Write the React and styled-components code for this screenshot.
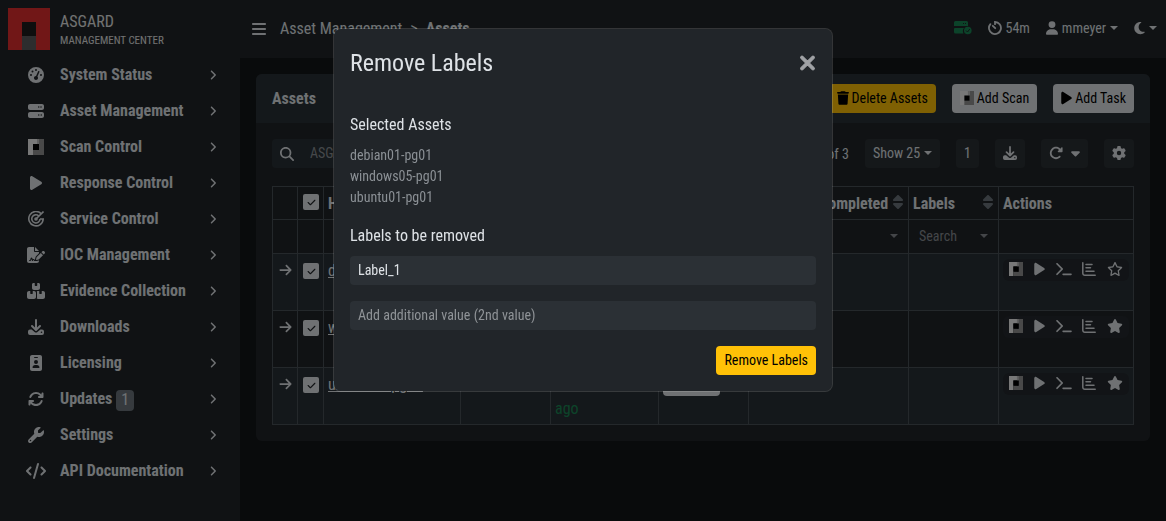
import React from 'react';
import styled, { createGlobalStyle } from 'styled-components';
import {
  FaGaugeHigh, FaServer, FaPlay, FaFileSignature, FaBoxesStacked, FaIdBadge, FaArrowsRotate,
  FaWrench, FaCode, FaAngleRight, FaBars, FaUser, FaMoon, FaTrash, FaMagnifyingGlass, FaArrowRight,
  FaRotateRight, FaGear, FaSort, FaStar, FaRegStar, FaXmark, FaTerminal, FaCheck, FaCaretDown,
} from 'react-icons/fa6';

const Global = createGlobalStyle`
  *, *::before, *::after { box-sizing: border-box; }
  body {
    margin: 0;
    background: #131619;
    color: #dee2e6;
    font: 400 16px/24px "Roboto Condensed", "Liberation Sans Narrow", Roboto, sans-serif;
  }
  button, input { font: inherit; color: inherit; }
  button { cursor: pointer; }
  a { color: inherit; }
  svg { display: block; flex: none; }
  h1, h2, h3, ul { margin: 0; padding: 0; font-weight: inherit; list-style: none; }
`;

// Gives an icon the width of its glyph instead of a square box.
const fit = (Icon, ratio) => styled(Icon)`
  width: ${p => Math.round(p.size * ratio)}px;
`;
const PlayIcon = fit(FaPlay, 0.75);
const SignatureIcon = fit(FaFileSignature, 1.125);
const BoxesIcon = fit(FaBoxesStacked, 1.125);
const CodeIcon = fit(FaCode, 1.25);
const AngleIcon = fit(FaAngleRight, 0.625);
const BarsIcon = fit(FaBars, 0.875);
const UserIcon = fit(FaUser, 0.875);
const MoonIcon = fit(FaMoon, 0.8);
const TrashIcon = fit(FaTrash, 0.875);
const ArrowIcon = fit(FaArrowRight, 0.9);
const SortIcon = fit(FaSort, 0.75);
const StarIcon = fit(FaStar, 1.125);
const StarOutlineIcon = fit(FaRegStar, 1.125);
const CloseIcon = fit(FaXmark, 0.75);
const TerminalIcon = fit(FaTerminal, 1.125);
const CaretIcon = fit(FaCaretDown, 0.625);

const Shell = styled.div`
  display: grid;
  grid-template-columns: 240px minmax(0, 1fr);
  min-height: 100vh;
`;
const Sidebar = styled.aside`
  background: #212529;
  padding: 8px;
`;
const Brand = styled.a`
  display: flex;
  gap: 10px;
  height: 49px;
  text-decoration: none;
`;
const BrandText = styled.span`
  display: flex;
  flex-direction: column;
  padding-top: 3px;
  color: #e4e4e4;
  font-size: 11px;
  line-height: 18px;
  strong { font-size: 16px; line-height: 21px; font-weight: 400; }
`;
const NavLink = styled.a`
  display: flex;
  align-items: center;
  height: 36px;
  padding: 0 15px 0 16px;
  font-weight: 700;
  text-decoration: none;
`;
const NavIcon = styled.span`
  display: flex;
  justify-content: center;
  width: 24px;
  margin-right: 12px;
`;
const NavText = styled.span`
  display: flex;
  align-items: center;
  gap: 4px;
  flex: 1;
`;
const CountBadge = styled.span`
  margin-top: 2px;
  padding: 0 5px 1px;
  border-radius: 4px;
  background: #6c757d;
  line-height: 20px;
  font-weight: 400;
`;
const Topbar = styled.header`
  display: flex;
  align-items: center;
  height: 58px;
  padding: 0 9px 0 12px;
  background: #212529;
`;
const PlainButton = styled.button`
  display: flex;
  align-items: center;
  gap: ${p => p.$gap || 0}px;
  padding: 0;
  border: 0;
  background: none;
`;
const Crumbs = styled.nav`
  display: flex;
  gap: 8px;
  flex: 1;
  margin-left: 14px;
  a { text-decoration: none; }
`;
const Status = styled.div`
  display: flex;
  align-items: center;
  gap: 16px;
  padding-bottom: 2px;
  font-size: 14px;
`;
const StatusItem = styled.span`
  display: flex;
  align-items: center;
  gap: 3px;
`;
const Caret = styled.span`
  border: 4px solid transparent;
  border-top-color: currentColor;
  border-bottom: 0;
`;
const Main = styled.main`
  padding: 16px;
`;
const Card = styled.section`
  border-radius: 6px;
  background: #212529;
  overflow: hidden;
`;
const CardHead = styled.div`
  display: flex;
  align-items: center;
  gap: 16px;
  height: 49px;
  padding: 0 16px;
  background: #293136;
  h2 { flex: 1; font-size: 16px; font-weight: 700; }
`;
const Button = styled.button`
  display: inline-flex;
  align-items: center;
  gap: 3px;
  height: 29px;
  padding: 0 8px 2px;
  border: 0;
  border-radius: 4px;
  background: ${p => (p.$tone === 'warning' ? '#ffc107' : '#dee2e6')};
  color: #000;
  font-size: 14px;
`;
const CardBody = styled.div`
  padding: 16px;
`;
const Toolbar = styled.div`
  display: flex;
  align-items: center;
  gap: 16px;
  margin-bottom: 18px;
  font-size: 14px;
`;
const SearchBox = styled.label`
  display: flex;
  align-items: center;
  flex: 1;
  height: 29px;
  padding-left: 8px;
  border-radius: 4px;
  background: #293136;
  input {
    flex: 1;
    margin-left: 16px;
    padding: 0 0 2px;
    border: 0;
    background: none;
  }
  input::placeholder { color: #8b9095; opacity: 1; }
`;
const ToolButton = styled.button`
  display: flex;
  align-items: center;
  justify-content: center;
  gap: ${p => p.$gap || 4}px;
  height: 29px;
  padding: 0 8px 2px;
  border: 0;
  border-radius: 4px;
  background: #2b3035;
`;
const Table = styled.table`
  width: 100%;
  table-layout: fixed;
  border-collapse: collapse;
  th, td { border: 1px solid #495057; padding: 5px 4px 3px; text-align: left; vertical-align: top; }
  thead td { padding: 4px; }
  thead tr { height: 33px; }
  thead tr + tr { height: 34px; }
  tbody tr { height: 57px; }
  tbody tr:nth-child(odd) { background: #293136; }
`;
const HeadCell = styled.div`
  display: flex;
  justify-content: space-between;
  white-space: nowrap;
  svg { color: #6c757d; margin-top: 2px; }
`;
const FilterButton = styled.button`
  display: flex;
  align-items: center;
  justify-content: space-between;
  width: 100%;
  height: 24px;
  padding: 0 6px;
  border: 0;
  background: none;
  color: #888d93;
  font-size: 14px;
`;
const Check = styled.label`
  display: grid;
  width: 16px;
  height: 16px;
  margin: 4px 1px;
  place-items: center;
  thead & { margin: 2px 1px 6px; }
  > * { grid-area: 1 / 1; }
  input {
    appearance: none;
    width: 16px;
    height: 16px;
    margin: 0;
    border-radius: 2px;
    background: #dee2e6;
  }
  svg { z-index: 1; color: #212529; pointer-events: none; }
`;
const RowOpen = styled(PlainButton)`
  margin: 4px 2px;
`;
const Seen = styled.span`
  color: #198754;
`;
const LabelTag = styled.span`
  display: block;
  width: fit-content;
  padding: 0 7px;
  border-radius: 4px;
  background: #dee2e6;
  color: #212529;
  font-size: 14px;
  line-height: 23px;
`;
const Actions = styled.div`
  display: flex;
  align-items: center;
  justify-content: space-between;
  height: 22px;
  padding: 0 6px 2px;
  border-radius: 6px;
  background: #24292e;
`;
const Backdrop = styled.div`
  position: fixed;
  inset: 0;
  z-index: 2;
  padding: 28px 16px;
  background: rgba(0, 0, 0, 0.5);
`;
const Modal = styled.div`
  max-width: 500px;
  margin: 0 auto;
  border: 1px solid rgba(255, 255, 255, 0.15);
  border-radius: 8px;
  background: #212529;
  background-clip: padding-box;
`;
const ModalHead = styled.div`
  display: flex;
  align-items: center;
  justify-content: space-between;
  padding: 16px;
  h1 { font-size: 24px; line-height: 36px; }
  button { color: #a0a2a5; }
`;
const ModalForm = styled.form`
  display: flex;
  flex-direction: column;
  padding: 16px;
  h2 { font-size: 16px; margin-bottom: 8px; }
`;
const AssetList = styled.ul`
  margin-bottom: 16px;
  color: #8b9095;
  font-size: 14px;
  line-height: 21px;
`;
const TextInput = styled.input`
  height: 29px;
  margin-bottom: 16px;
  padding: 0 8px 2px;
  border: 0;
  border-radius: 4px;
  background: #2b3035;
  font-size: 14px;
  &::placeholder { color: #8f9397; opacity: 1; }
`;
const SubmitButton = styled(Button)`
  align-self: flex-end;
`;

const Logo = () => (
  <svg width="42" height="42" viewBox="0 0 42 42" aria-hidden="true">
    <path fill="#e22e2e" d="M0 0h42v42H28V14H14v28H0z" />
    <path fill="#1c1c1c" d="M14 14h14v14H14z" />
    <path fill="#5a5a5c" d="M14 28h14v14H14z" />
  </svg>
);
const ScanIcon = ({ size = 16 }) => (
  <svg width={size} height={size} viewBox="0 0 16 16" aria-hidden="true">
    <path fill="#f0f0f0" d="M0 0h11v5H5v11H0z" />
    <path fill="#929292" d="M11 0h5v16H5v-5h6z" />
    <path fill="#c0c0c0" d="M9 0h2v5H9z" />
    <path fill="#000" d="M5 5h6v6H5z" />
  </svg>
);
const TargetIcon = ({ size = 16 }) => (
  <svg width={size} height={size} viewBox="0 0 16 16" fill="none" stroke="currentColor" strokeWidth="1.6" aria-hidden="true">
    <path d="M13.2 2.7A7.2 7.2 0 1 0 15.2 8H12M10.6 4.8A4.1 4.1 0 1 0 12 8M8 8l7.5-7.5" />
    <circle cx="8" cy="8" r="1" fill="currentColor" />
  </svg>
);
const DownloadIcon = ({ size = 16 }) => (
  <svg width={size} height={size} viewBox="0 0 16 16" aria-hidden="true">
    <path fill="none" stroke="currentColor" strokeWidth="2" strokeLinecap="round" strokeLinejoin="round" d="M8 1v9.5M4 7l4 4 4-4" />
    <path fill="currentColor" fillRule="evenodd" d="M2 10.5h1.6L6.6 13a2.2 2.2 0 0 0 2.8 0l3-2.5H14a2 2 0 0 1 2 2V14a2 2 0 0 1-2 2H2a2 2 0 0 1-2-2v-1.5a2 2 0 0 1 2-2zM13.5 12.5a.8.8 0 1 0 0 1.6.8.8 0 0 0 0-1.6z" />
  </svg>
);
const TimerIcon = ({ size = 14 }) => (
  <svg width={size} height={size} viewBox="0 0 14 14" fill="none" stroke="currentColor" strokeWidth="1.8" strokeLinecap="round" aria-hidden="true">
    <path d="M7 3.2V1a6 6 0 1 1-4.600 2.100M4.800 4.800L7.200 7.200" />
  </svg>
);
const ReportIcon = ({ size = 14 }) => (
  <svg width={size} height={size} viewBox="0 0 14 14" fill="none" stroke="currentColor" strokeWidth="1.5" strokeLinecap="round" strokeLinejoin="round" aria-hidden="true">
    <path d="M.8.8v10.400a2 2 0 0 0 2 2h10.400M4 2.500h6M4 5.800h4.500M4 9.200h8" />
  </svg>
);
const ServerCheckIcon = () => (
  <svg width="18" height="14" viewBox="0 0 18 14" aria-hidden="true">
    <path fill="#198754" fillRule="evenodd" d="M1.5 0h11A1.5 1.5 0 0 1 14 1.5V5H0V1.5A1.5 1.5 0 0 1 1.5 0zM9 2v1h1V2zM11 2v1h1V2zM1 7h9a5 5 0 0 0-.5 5.5H1.5A1.5 1.5 0 0 1 0 11V8a1 1 0 0 1 1-1z" />
    <circle cx="13.8" cy="9.5" r="3.8" fill="#198754" />
    <path fill="none" stroke="#212529" d="M12 9.500l1.500 1.500 2.300-3" />
  </svg>
);

const NAV = [
  ['System Status', FaGaugeHigh],
  ['Asset Management', FaServer],
  ['Scan Control', ScanIcon],
  ['Response Control', PlayIcon],
  ['Service Control', TargetIcon],
  ['IOC Management', SignatureIcon],
  ['Evidence Collection', BoxesIcon],
  ['Downloads', DownloadIcon],
  ['Licensing', FaIdBadge],
  ['Updates', FaArrowsRotate, 1],
  ['Settings', FaWrench],
  ['API Documentation', CodeIcon],
];
const ASSETS = [
  { name: 'debian01-pg01', starred: false },
  { name: 'windows05-pg01', starred: true },
  { name: 'ubuntu01-pg01', starred: true },
];
const COLUMNS = ['Hostname', 'Status', 'Last Seen', 'Labels', 'Last Scan Completed', 'Labels'];
const WIDTHS = [25, 26, 137, 90, 108, 90, null, 90, 135];

const Checkbox = ({ label }) => (
  <Check>
    <input type="checkbox" defaultChecked aria-label={label} />
    <FaCheck size={9} />
  </Check>
);

export default function App() {
  return (
    <>
      <Global />
      <Shell>
        <Sidebar>
          <Brand href="#home">
            <Logo />
            <BrandText><strong>ASGARD</strong>MANAGEMENT CENTER</BrandText>
          </Brand>
          <nav>
            {NAV.map(([name, Icon, count]) => (
              <NavLink href="#nav" key={name}>
                <NavIcon><Icon size={16} /></NavIcon>
                <NavText>{name}{count && <CountBadge>{count}</CountBadge>}</NavText>
                <AngleIcon size={12} />
              </NavLink>
            ))}
          </nav>
        </Sidebar>
        <div>
          <Topbar>
            <PlainButton aria-label="Toggle menu"><BarsIcon size={16} /></PlainButton>
            <Crumbs><a href="#am">Asset Management</a><span>&gt;</span><b>Assets</b></Crumbs>
            <Status>
              <ServerCheckIcon />
              <StatusItem><TimerIcon />54m</StatusItem>
              <PlainButton $gap={4}><UserIcon size={14} />mmeyer<Caret /></PlainButton>
              <PlainButton $gap={4} aria-label="Theme"><MoonIcon size={14} /><Caret /></PlainButton>
            </Status>
          </Topbar>
          <Main>
            <Card>
              <CardHead>
                <h2>Assets</h2>
                <Button $tone="warning"><TrashIcon size={14} />Delete Assets</Button>
                <Button><ScanIcon size={14} />Add Scan</Button>
                <Button><PlayIcon size={14} />Add Task</Button>
              </CardHead>
              <CardBody>
                <Toolbar>
                  <SearchBox>
                    <FaMagnifyingGlass size={14} />
                    <input placeholder="ASGARD Query" aria-label="Search assets" />
                  </SearchBox>
                  <span>1 - 3 of 3</span>
                  <ToolButton>Show 25<Caret /></ToolButton>
                  <ToolButton>1</ToolButton>
                  <ToolButton aria-label="Download"><DownloadIcon size={14} /></ToolButton>
                  <ToolButton $gap={8} aria-label="Refresh"><FaRotateRight size={14} /><CaretIcon size={14} /></ToolButton>
                  <ToolButton aria-label="Table settings"><FaGear size={14} /></ToolButton>
                </Toolbar>
                <Table>
                  <colgroup>{WIDTHS.map((w, i) => <col key={i} width={w || undefined} />)}</colgroup>
                  <thead>
                    <tr>
                      <th />
                      <th><Checkbox label="Select all" /></th>
                      {COLUMNS.map((c, i) => <th key={i}><HeadCell>{c}<SortIcon size={16} /></HeadCell></th>)}
                      <th>Actions</th>
                    </tr>
                    <tr>
                      <td /><td />
                      {COLUMNS.map((c, i) => (
                        <td key={i}><FilterButton>{i === 5 ? 'Search' : <span />}<Caret /></FilterButton></td>
                      ))}
                      <td />
                    </tr>
                  </thead>
                  <tbody>
                    {ASSETS.map(a => (
                      <tr key={a.name}>
                        <td><RowOpen aria-label="Open"><ArrowIcon size={14} /></RowOpen></td>
                        <td><Checkbox label={a.name} /></td>
                        <td><a href="#asset">{a.name}</a></td>
                        <td />
                        <td><Seen>a few seconds ago</Seen></td>
                        <td><LabelTag>Label_1</LabelTag></td>
                        <td /><td />
                        <td>
                          <Actions>
                            <PlainButton aria-label="Scan"><ScanIcon size={14} /></PlainButton>
                            <PlainButton aria-label="Run"><PlayIcon size={14} /></PlainButton>
                            <PlainButton aria-label="Console"><TerminalIcon size={14} /></PlainButton>
                            <PlainButton aria-label="Report"><ReportIcon size={14} /></PlainButton>
                            <PlainButton aria-label="Favourite">{a.starred ? <StarIcon size={14} /> : <StarOutlineIcon size={14} />}</PlainButton>
                          </Actions>
                        </td>
                      </tr>
                    ))}
                  </tbody>
                </Table>
              </CardBody>
            </Card>
          </Main>
        </div>
      </Shell>
      <Backdrop>
        <Modal role="dialog" aria-modal="true" aria-labelledby="dialog-title">
          <ModalHead>
            <h1 id="dialog-title">Remove Labels</h1>
            <PlainButton aria-label="Close"><CloseIcon size={22} stroke="currentColor" strokeWidth={24} /></PlainButton>
          </ModalHead>
          <ModalForm onSubmit={e => e.preventDefault()}>
            <h2>Selected Assets</h2>
            <AssetList>{ASSETS.map(a => <li key={a.name}>{a.name}</li>)}</AssetList>
            <h2 id="labels-title">Labels to be removed</h2>
            <TextInput defaultValue="Label_1" aria-labelledby="labels-title" />
            <TextInput placeholder="Add additional value (2nd value)" aria-label="Additional label" />
            <SubmitButton $tone="warning">Remove Labels</SubmitButton>
          </ModalForm>
        </Modal>
      </Backdrop>
    </>
  );
}
